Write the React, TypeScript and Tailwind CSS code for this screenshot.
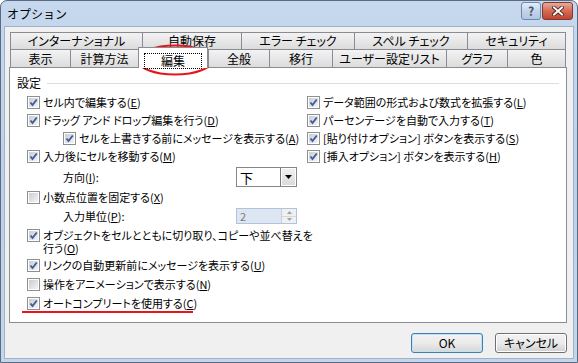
import React from 'react'

const font = "font-['Noto_Sans_CJK_JP','Noto_Sans',sans-serif] [font-feature-settings:'palt']"

function Key({ k }: { k: string }) {
  return (
    <>
      (<span className="underline underline-offset-[1px]">{k}</span>)
    </>
  )
}

function Box({ checked }: { checked: boolean }) {
  return (
    <span className="relative block h-[13px] w-[13px] shrink-0 border border-[#8e8f8f] bg-white">
      <span className="absolute inset-[1px] bg-gradient-to-br from-[#c9ccd1] to-[#f4f4f5]" />
      {checked && (
        <svg viewBox="0 0 11 11" className="absolute left-0 top-0 h-[11px] w-[11px]">
          <path d="M2.5 5.5 L4.5 8 L8.8 2.5" fill="none" stroke="#3f5d9c" strokeWidth="1.9" />
        </svg>
      )}
    </span>
  )
}

function Check({ label, k, checked, className = '' }: { label: React.ReactNode; k: string; checked: boolean; className?: string }) {
  return (
    <div className={`flex items-center gap-[3px] ${className}`}>
      <Box checked={checked} />
      <span className="whitespace-nowrap">
        {label}
        <Key k={k} />
      </span>
    </div>
  )
}

const row1 = [
  { t: 'インターナショナル', w: 'w-[132px]' },
  { t: '自動保存', w: 'w-[99px]' },
  { t: 'エラー チェック', w: 'w-[113px]' },
  { t: 'スペル チェック', w: 'w-[113px]' },
  { t: 'セキュリティ', w: 'w-[99px]' },
]

const row2 = [
  { t: '表示', w: 'w-[60px]' },
  { t: '計算方法', w: 'w-[68px]' },
  { t: '編集', w: 'w-[70px]', on: true },
  { t: '全般', w: 'w-[61px]' },
  { t: '移行', w: 'w-[63px]' },
  { t: 'ユーザー設定リスト', w: 'w-[114px]' },
  { t: 'グラフ', w: 'w-[61px]' },
  { t: '色', w: 'w-[59px]' },
]

const rightItems = [
  { t: 'データ範囲の形式および数式を拡張する', k: 'L' },
  { t: 'パーセンテージを自動で入力する', k: 'T' },
  { t: '[貼り付けオプション] ボタンを表示する', k: 'S' },
  { t: '[挿入オプション] ボタンを表示する', k: 'H' },
]

function Tab({ t, w, last }: { t: string; w: string; last?: boolean }) {
  return (
    <div
      className={`${w} flex h-full items-center justify-center border-l border-t border-[#898c95] bg-gradient-to-b from-[#f3f3f3] to-[#dcdcdc] ${
        last ? 'border-r' : ''
      }`}
    >
      {t}
    </div>
  )
}

export default function App() {
  return (
    <div className={`relative h-[363px] w-[578px] text-[11px] leading-none text-black ${font}`}>
      <div className="flex h-[363px] w-[578px] flex-col rounded-t-[7px] border border-[#5a6b82] bg-gradient-to-b from-[#c6d8ee] via-[#bcd1ea] to-[#c3d6ec]">
        {/* title bar */}
        <div className="flex h-[25px] items-center justify-between pl-[6px] pr-[4px]">
          <span className="text-[12px] [font-feature-settings:normal]">オプション</span>
          <div className="flex items-start gap-[1px] self-start pt-[1px]">
            <div className="flex h-[18px] w-[20px] items-center justify-center rounded-[3px] border border-[#6d87ad] bg-gradient-to-b from-[#e4edf8] via-[#c3d4ea] to-[#b0c6e2] text-[12px] font-bold text-[#47536a]">
              ?
            </div>
            <div className="flex h-[18px] w-[31px] items-center justify-center rounded-[3px] border border-[#7b3b33] bg-gradient-to-b from-[#e8a99c] via-[#d56a55] to-[#c3432c]">
              <svg viewBox="0 0 12 10" className="h-[10px] w-[12px]">
                <path d="M2 1.5 L10 8.5 M10 1.5 L2 8.5" stroke="#3a1a16" strokeWidth="3.6" strokeLinecap="square" />
                <path d="M2 1.5 L10 8.5 M10 1.5 L2 8.5" stroke="#ffffff" strokeWidth="2" strokeLinecap="square" />
              </svg>
            </div>
          </div>
        </div>

        {/* client area */}
        <div className="mx-[3px] mb-[3px] flex flex-1 flex-col border border-[#9fb2c9] bg-[#f0f0f0] pl-[4px] pr-[6px] pt-[5px]">
          {/* tab rows */}
          <div className="ml-[1px] flex h-[17px] text-[12px]">
            {row1.map((r, i) => (
              <Tab key={r.t} t={r.t} w={r.w} last={i === row1.length - 1} />
            ))}
          </div>
          <div className="relative z-10 ml-[1px] flex h-[18px] text-[12px]">
            {row2.map((r, i) =>
              r.on ? (
                <div
                  key={r.t}
                  className={`${r.w} -mt-[2px] flex h-[21px] items-start justify-center border-x border-t border-[#898c95] bg-white pt-[5px]`}
                >
                  <span className="border border-dotted border-black px-[16px] py-[1px]">{r.t}</span>
                </div>
              ) : (
                <Tab key={r.t} t={r.t} w={r.w} last={i === row2.length - 1} />
              ),
            )}
          </div>

          {/* tab page */}
          <div className="relative h-[256px] border border-[#898c95] bg-white">
            <div className="mt-[8px] flex h-[14px] items-center gap-[6px] pl-[7px] pr-[7px] text-[12px]">
              <span>設定</span>
              <div className="h-px flex-1 bg-[#d5dfe5]" />
            </div>

            <div className="mt-[3px] flex">
              {/* left column */}
              <div className="flex w-[297px] flex-col pl-[17px]">
                <Check className="h-[18px]" label="セル内で編集する" k="E" checked />
                <Check className="h-[18px]" label="ドラッグ アンド ドロップ編集を行う" k="D" checked />
                <Check className="h-[18px] pl-[36px]" label="セルを上書きする前にメッセージを表示する" k="A" checked />
                <Check className="h-[18px]" label="入力後にセルを移動する" k="M" checked />
                <div className="flex h-[24px] items-center pl-[36px]">
                  <span className="w-[173px]">
                    方向<Key k="I" />:
                  </span>
                  <div className="flex h-[20px] w-[61px] border border-[#828790] bg-white">
                    <span className="flex-1 pl-[3px] pt-[3px] text-[13px]">下</span>
                    <div className="flex w-[16px] items-center justify-center border-l border-[#7a7a7a] bg-gradient-to-b from-[#f2f2f2] to-[#d9d9d9] shadow-[inset_0_0_0_1px_#ffffff]">
                      <svg viewBox="0 0 7 4" className="h-[4px] w-[7px]">
                        <path d="M0 0 H7 L3.5 4 Z" fill="#000" />
                      </svg>
                    </div>
                  </div>
                </div>
                <Check className="h-[17px]" label="小数点位置を固定する" k="X" checked={false} />
                <div className="flex h-[20px] items-center pl-[36px]">
                  <span className="w-[173px]">
                    入力単位<Key k="P" />:
                  </span>
                  <div className="flex h-[16px] w-[61px] border border-[#b3c4da] bg-[#dce7f3]">
                    <span className="flex-1 pl-[3px] pt-[2px] text-[#7a7a7a]">2</span>
                    <div className="flex w-[15px] flex-col border-l border-[#c9d0d8] bg-[#eef0f2]">
                      <div className="flex flex-1 items-center justify-center border-b border-[#d4d8dc]">
                        <svg viewBox="0 0 5 3" className="h-[3px] w-[5px]">
                          <path d="M0 3 H5 L2.5 0 Z" fill="#a0a0a0" />
                        </svg>
                      </div>
                      <div className="flex flex-1 items-center justify-center">
                        <svg viewBox="0 0 5 3" className="h-[3px] w-[5px]">
                          <path d="M0 0 H5 L2.5 3 Z" fill="#a0a0a0" />
                        </svg>
                      </div>
                    </div>
                  </div>
                </div>
                <div className="flex h-[29px] items-start gap-[3px] pt-[3px]">
                  <div className="flex h-[13px] items-center">
                    <Box checked />
                  </div>
                  <span className="flex flex-col whitespace-nowrap">
                    <span className="flex h-[13px] items-center">オブジェクトをセルとともに切り取り、コピーや並べ替えを</span>
                    <span className="flex h-[13px] items-center">
                      行う<Key k="O" />
                    </span>
                  </span>
                </div>
                <Check className="h-[20px]" label="リンクの自動更新前にメッセージを表示する" k="U" checked />
                <Check className="h-[18px]" label="操作をアニメーションで表示する" k="N" checked={false} />
                <Check className="h-[20px]" label="オートコンプリートを使用する" k="C" checked />
              </div>

              {/* right column */}
              <div className="flex flex-col">
                {rightItems.map((it) => (
                  <Check key={it.k} className="h-[18px]" label={it.t} k={it.k} checked />
                ))}
              </div>
            </div>

            {/* red annotation underline */}
            <div className="absolute left-[12px] top-[243px] h-[2px] w-[171px] bg-[#e8141b]" />
          </div>

          {/* buttons */}
          <div className="mt-[10px] flex justify-end gap-[12px] text-[12px]">
            <button className="h-[20px] w-[72px] rounded-[3px] border border-[#3c7fb1] bg-gradient-to-b from-[#f2f2f2] via-[#ebebeb] to-[#d6d6d6] shadow-[inset_0_0_0_1px_#bfe3f7]">
              OK
            </button>
            <button className="h-[20px] w-[72px] rounded-[3px] border border-[#707070] bg-gradient-to-b from-[#f2f2f2] via-[#ebebeb] to-[#cfcfcf] shadow-[inset_0_0_0_1px_#ffffff]">
              キャンセル
            </button>
          </div>
        </div>
      </div>

      {/* red annotation ellipse around selected tab */}
      <svg className="absolute left-[136px] top-[44px]" width="78" height="32" viewBox="0 0 78 32">
        <ellipse cx="39" cy="16" rx="37.5" ry="14.5" fill="none" stroke="#e8141b" strokeWidth="2" />
      </svg>
    </div>
  )
}
